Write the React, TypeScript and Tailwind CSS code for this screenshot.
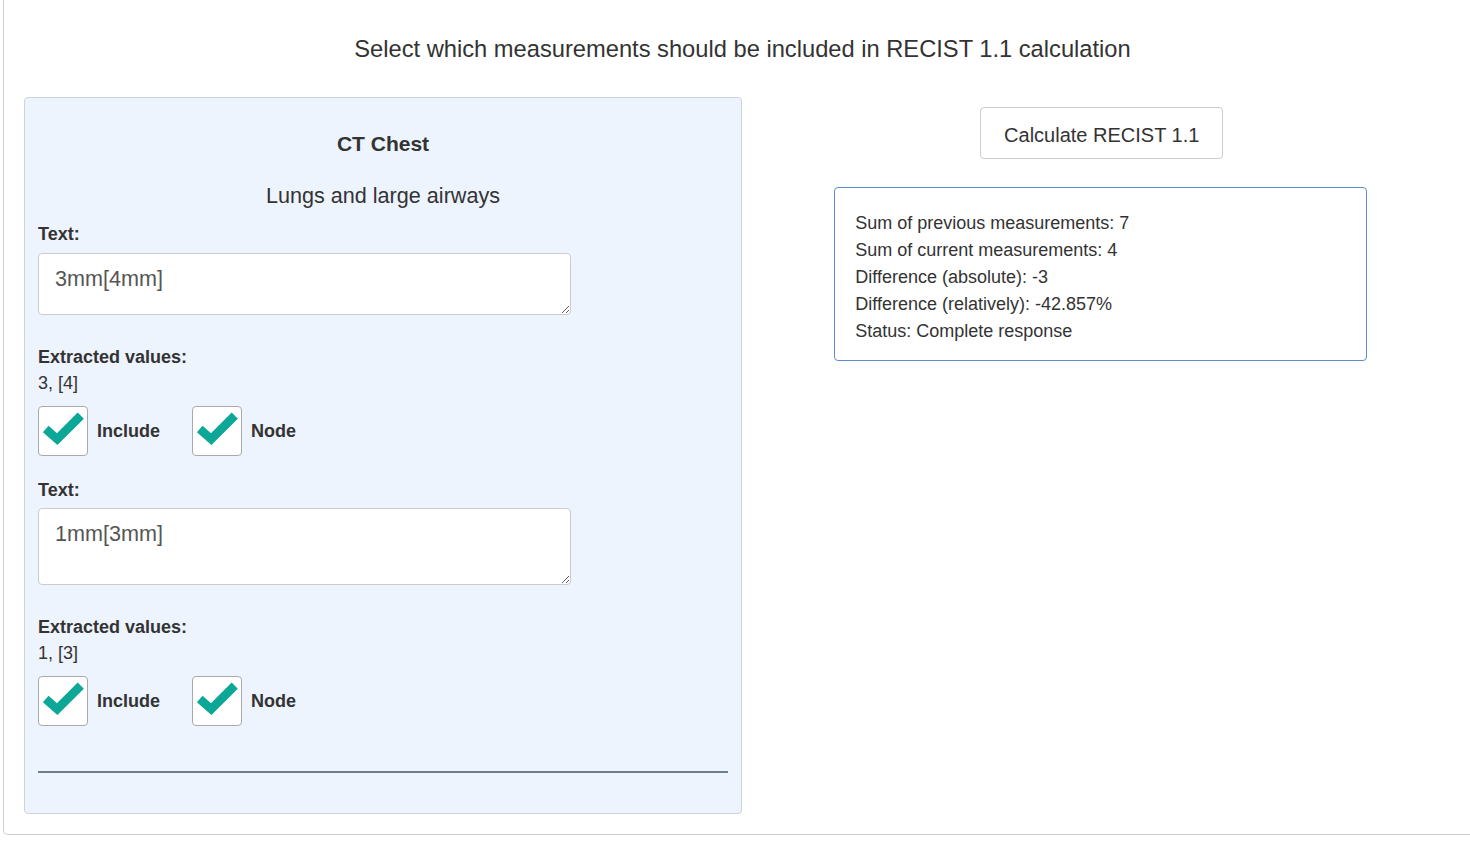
import React from "react";

interface Measurement {
  text: string;
  values: string;
}

const measurements: Measurement[] = [
  { text: "3mm[4mm]", values: "3, [4]" },
  { text: "1mm[3mm]", values: "1, [3]" },
];

const results = [
  "Sum of previous measurements: 7",
  "Sum of current measurements: 4",
  "Difference (absolute): -3",
  "Difference (relatively): -42.857%",
  "Status: Complete response",
];

const CheckBox = ({ label }: { label: string }) => (
  <label className="flex items-center">
    <span className="flex h-[50px] w-[50px] items-center justify-center rounded-[4px] border border-[#aaaaaa] bg-white">
      <svg width="50" height="50" viewBox="0 0 50 50" fill="none">
        <path
          d="M7 23L19 33.5L43.5 9"
          stroke="#0ca796"
          strokeWidth="9"
          strokeLinejoin="miter"
        />
      </svg>
    </span>
    <span className="ml-[9px] text-[18px] font-bold text-[#333]">{label}</span>
  </label>
);

const MeasurementField = ({ m, first }: { m: Measurement; first: boolean }) => (
  <div className={first ? "mt-[12px]" : "mt-[22px]"}>
    <div className="text-[18px] font-bold leading-[24px] text-[#333]">Text:</div>
    <textarea
      defaultValue={m.text}
      className={`${first ? "mt-[7px] h-[62px]" : "mt-[6px] h-[77px]"} block w-[533px] rounded-[4px] border border-[#cccccc] bg-white px-[16px] py-[11px] text-[21.6px] leading-[28px] text-[#555] outline-none`}
    />
    <div className="mt-[30px] text-[18px] font-bold leading-[24px] text-[#333]">
      Extracted values:
    </div>
    <div className="mt-[2px] text-[18px] leading-[24px] text-[#333]">{m.values}</div>
    <div className="mt-[11px] flex items-center gap-[32px]">
      <CheckBox label="Include" />
      <CheckBox label="Node" />
    </div>
  </div>
);

export default function App() {
  return (
    <div
      className="w-[1470px] overflow-hidden bg-white text-[#333]"
      style={{ fontFamily: '"Liberation Sans", Arial, sans-serif' }}
    >
      <div className="ml-[3px] w-[1478px] rounded-bl-[5px] border-b border-l border-[#cfcfcf] px-[20px] pb-[20px]">
        <h1 className="pt-[34px] text-center text-[23.7px] leading-[30px] text-[#333]">
          Select which measurements should be included in RECIST 1.1 calculation
        </h1>
        <div className="mt-[33px] grid grid-cols-2">
          <div className="w-[718px] rounded-[4px] border border-[#cdd3da] bg-[#edf4fe] px-[13px] pb-[40px]">
            <h2 className="pt-[32px] text-center text-[21px] font-bold leading-[28px]">CT Chest</h2>
            <div className="mt-[24px] text-center text-[21.6px] leading-[28px]">
              Lungs and large airways
            </div>
            {measurements.map((m, i) => (
              <MeasurementField key={m.text} m={m} first={i === 0} />
            ))}
            <hr className="mt-[45px] border-0 border-t-2 border-[#6e7e8e]" />
          </div>
          <div className="flex flex-col items-center">
            <button className="mt-[10px] h-[52px] rounded-[4px] border border-[#cccccc] bg-white px-[23px] pt-[3px] text-[20px] text-[#333]">
              Calculate RECIST 1.1
            </button>
            <div className="ml-[-2px] mt-[28px] w-[533px] rounded-[4px] border border-[#5f8ccf] pb-[15px] pl-[20px] pt-[22px]">
              {results.map((r) => (
                <div key={r} className="text-[18px] leading-[27px] text-[#333]">
                  {r}
                </div>
              ))}
            </div>
          </div>
        </div>
      </div>
    </div>
  );
}
